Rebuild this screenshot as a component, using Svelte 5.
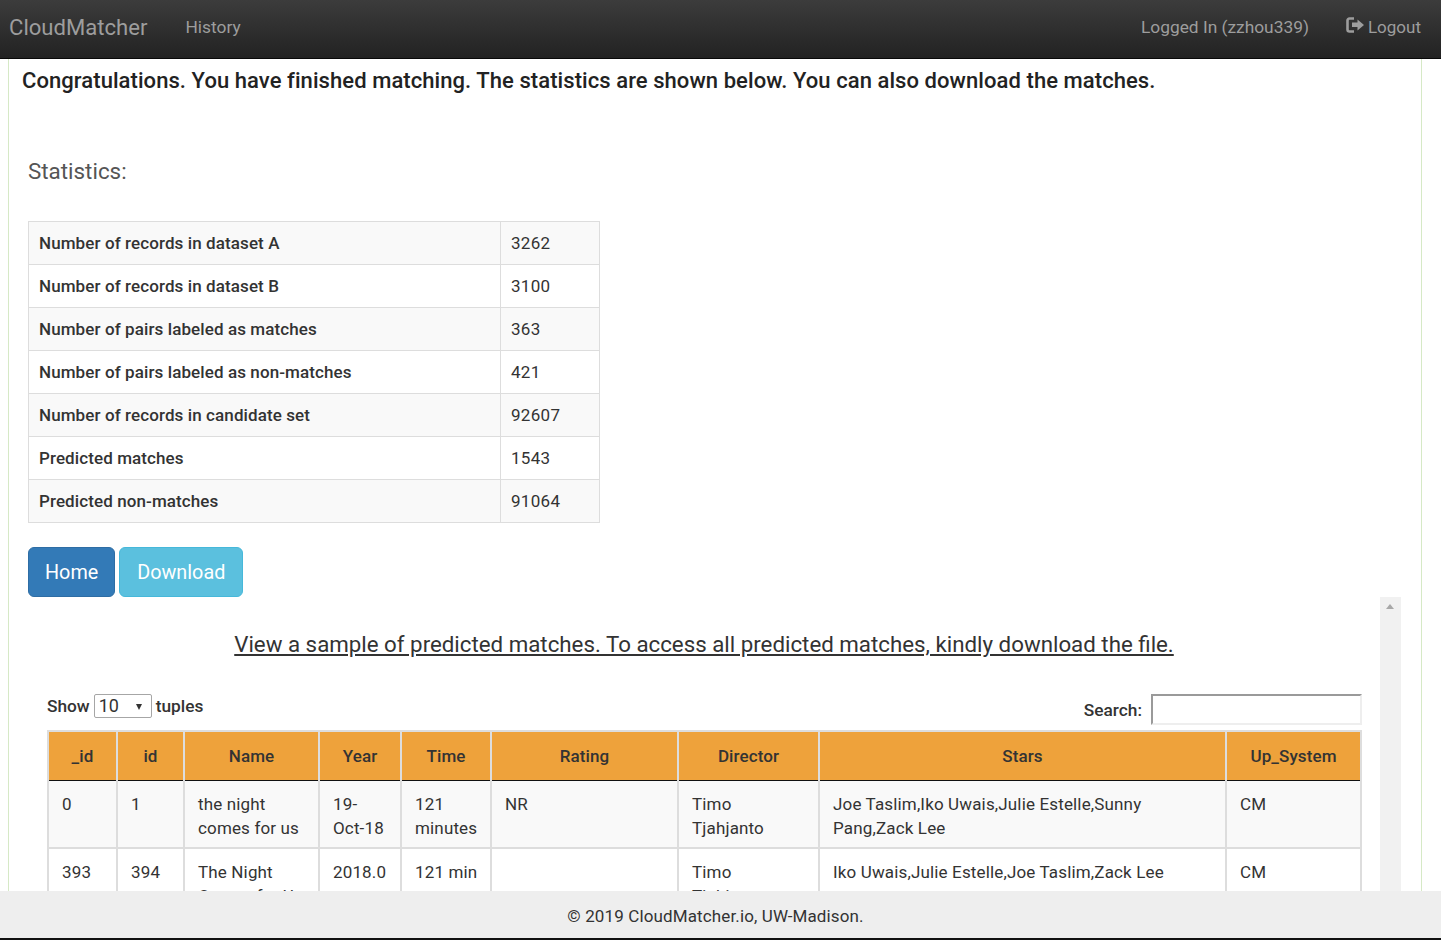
<script>
	const stats = [
		["Number of records in dataset A", "3262"],
		["Number of records in dataset B", "3100"],
		["Number of pairs labeled as matches", "363"],
		["Number of pairs labeled as non-matches", "421"],
		["Number of records in candidate set", "92607"],
		["Predicted matches", "1543"],
		["Predicted non-matches", "91064"]
	];

	const columns = [
		{ name: "_id", width: 69 },
		{ name: "id", width: 67 },
		{ name: "Name", width: 135 },
		{ name: "Year", width: 82 },
		{ name: "Time", width: 90 },
		{ name: "Rating", width: 187 },
		{ name: "Director", width: 141 },
		{ name: "Stars", width: 407 },
		{ name: "Up_System", width: 135 }
	];

	const rows = [
		["0", "1", "the night comes for us", "19-Oct-18", "121 minutes", "NR", "Timo Tjahjanto", "Joe Taslim,Iko Uwais,Julie Estelle,Sunny Pang,Zack Lee", "CM"],
		["393", "394", "The Night Comes for Us", "2018.0", "121 min", "", "Timo Tjahjanto", "Iko Uwais,Julie Estelle,Joe Taslim,Zack Lee", "CM"]
	];
</script>

<div class="page">
	<nav class="navbar">
		<a class="brand" href="#home">CloudMatcher</a>
		<a class="nav-link history" href="#history">History</a>
		<span class="nav-link user">Logged In (zzhou339)</span>
		<a class="nav-link logout" href="#logout">
			<svg width="19" height="16" viewBox="0 0 19 16" aria-hidden="true">
				<path d="M8 1.500H3.500A2 2 0 0 0 1.500 3.500v9a2 2 0 0 0 2 2H8" fill="none" stroke="currentColor" stroke-width="2.600" />
				<path d="M6 5.500h5.500V2.500L18 8l-6.500 5.500v-3.500H6z" fill="currentColor" />
			</svg>
			Logout
		</a>
	</nav>

	<main class="panel">
		<h3 class="congrats">Congratulations. You have finished matching. The statistics are shown below. You can also download the matches.</h3>
		<div class="body">
			<h4 class="stat-title">Statistics:</h4>
			<table class="stats">
				<tbody>
					{#each stats as [label, value]}
						<tr>
							<th>{label}</th>
							<td>{value}</td>
						</tr>
					{/each}
				</tbody>
			</table>
			<div class="actions">
				<button class="btn home">Home</button>
				<button class="btn download">Download</button>
			</div>

			<div class="scroller">
				<div class="sample">
					<h4 class="sample-title">View a sample of predicted matches. To access all predicted matches, kindly download the file.</h4>
					<div class="controls">
						<label class="show">
							Show
							<span class="select">10<i></i></span>
							tuples
						</label>
						<label class="search">
							Search:
							<input type="text" />
						</label>
					</div>
					<table class="tuples">
						<colgroup>
							{#each columns as col}
								<col style="width: {col.width}px" />
							{/each}
						</colgroup>
						<thead>
							<tr>
								{#each columns as col}
									<th>{col.name}</th>
								{/each}
							</tr>
						</thead>
						<tbody>
							{#each rows as row}
								<tr>
									{#each row as cell}
										<td>{cell}</td>
									{/each}
								</tr>
							{/each}
						</tbody>
					</table>
				</div>
				<div class="track"><i></i></div>
			</div>
		</div>
	</main>

	<footer class="footer">© 2019 CloudMatcher.io, UW-Madison.</footer>
</div>

<style>
	:global(body) {
		margin: 0;
		background: #fff;
	}
	.page {
		height: 940px;
		display: flex;
		flex-direction: column;
		overflow: hidden;
		font-family: Roboto, "Liberation Sans", sans-serif;
		color: #333;
	}
	.navbar {
		flex: none;
		box-sizing: border-box;
		height: 59px;
		display: flex;
		align-items: center;
		padding: 0 20px 4px 9px;
		background: linear-gradient(to bottom, #3c3c3c 0%, #222 100%);
		border-bottom: 1px solid #080808;
	}
	.brand {
		font-size: 22.100px;
		color: #9d9d9d;
		text-decoration: none;
	}
	.nav-link {
		font-size: 17.350px;
		color: #9d9d9d;
		text-decoration: none;
	}
	.history {
		margin-left: 38px;
	}
	.user {
		margin-left: auto;
	}
	.logout {
		margin-left: 37px;
		display: flex;
		align-items: center;
		gap: 3px;
		font-size: 17px;
	}
	.logout svg {
		margin-top: -5px;
	}
	.panel {
		flex: 1;
		min-height: 0;
		margin: 0 19px 0 8px;
		border-left: 1px solid #d6e9c6;
		border-right: 1px solid #d6e9c6;
		overflow: hidden;
	}
	.congrats {
		margin: 0;
		padding: 8px 0 0 13px;
		font-size: 22px;
		letter-spacing: 0.07px;
		line-height: 28px;
		font-weight: 500;
		color: #222;
	}
	.body {
		padding: 0 19px;
	}
	.stat-title {
		margin: 62px 0 0;
		font-size: 22.400px;
		line-height: 28px;
		font-weight: 400;
		color: #555;
	}
	.stats {
		margin-top: 36px;
		width: 572px;
		border-collapse: collapse;
		font-size: 17px;
	}
	.stats th,
	.stats td {
		padding: 0 10px;
		border: 1px solid #ddd;
		text-align: left;
		box-sizing: border-box;
		height: 43px;
	}
	.stats th {
		width: 472px;
		font-weight: 500;
		letter-spacing: 0.1px;
		color: #333;
	}
	.stats td {
		font-weight: 400;
		letter-spacing: 0.3px;
	}
	.stats tr:nth-child(odd) {
		background: #f9f9f9;
	}
	.actions {
		margin-top: 24px;
		display: flex;
		gap: 4px;
	}
	.btn {
		height: 50px;
		padding: 0 17px;
		border-radius: 6px;
		border: 1px solid;
		font: 400 19.800px Roboto, sans-serif;
		color: #fff;
	}
	.home {
		padding: 0 16px;
		background: #337ab7;
		border-color: #2e6da4;
	}
	.download {
		background: #5bc0de;
		border-color: #46b8da;
	}
	.scroller {
		display: flex;
	}
	.sample {
		width: 1352px;
		flex: none;
	}
	.sample-title {
		margin: 0;
		padding-top: 32px;
		font-size: 22.300px;
		line-height: 30px;
		font-weight: 400;
		text-align: center;
		text-decoration: underline;
		color: #333;
	}
	.controls {
		margin: 32px 18px 0 19px;
		height: 39px;
		display: flex;
		justify-content: space-between;
		align-items: flex-start;
		font-size: 17.300px;
		font-weight: 500;
	}
	.show {
		display: flex;
		align-items: center;
		gap: 4px;
		height: 24px;
		margin-top: 3px;
	}
	.select {
		width: 58px;
		height: 24px;
		box-sizing: border-box;
		border: 1px solid #a6a6a6;
		border-radius: 2px;
		padding-left: 4px;
		font-size: 18px;
		font-weight: 400;
		line-height: 22px;
		position: relative;
	}
	.select i {
		position: absolute;
		right: 9px;
		top: 9px;
		border: 3.500px solid transparent;
		border-top: 6px solid #333;
		border-bottom: 0;
	}
	.search {
		display: flex;
		align-items: center;
		gap: 9px;
		height: 31px;
		margin-top: 3px;
	}
	.search input {
		width: 211px;
		height: 31px;
		box-sizing: border-box;
		padding: 0;
		border: 2px solid #eee;
		border-top-color: #9a9a9a;
		border-left-color: #9a9a9a;
		background: #fff;
		margin: 0;
	}
	.tuples {
		margin-left: 19px;
		width: 1315px;
		table-layout: fixed;
		border-collapse: collapse;
		font-size: 17px;
	}
	.tuples th,
	.tuples td {
		border: 2px solid #ddd;
		box-sizing: border-box;
	}
	.tuples th {
		height: 49px;
		background: #eea23b;
		border-bottom: 1px solid #111;
		font-weight: 500;
		letter-spacing: 0.1px;
		color: #333;
		text-align: center;
		padding: 0;
	}
	.tuples td {
		padding: 11px 12px 7px 13px;
		line-height: 24px;
		vertical-align: top;
		font-weight: 400;
		letter-spacing: 0.15px;
	}
	.tuples tbody tr:first-child td {
		border-top: 0;
	}
	.tuples tbody tr:nth-child(odd) {
		background: #f9f9f9;
	}
	.track {
		flex: none;
		width: 21px;
		background: #f1f1f1;
		position: relative;
		height: 400px;
	}
	.track i {
		position: absolute;
		left: 6px;
		top: 7px;
		border: 4.500px solid transparent;
		border-bottom: 5px solid #a8a8a8;
		border-top: 0;
	}
	.footer {
		flex: none;
		height: 47px;
		padding-right: 10px;
		line-height: 50px;
		background: #eee;
		border-bottom: 2px solid #111;
		text-align: center;
		font-size: 17px;
		letter-spacing: 0.13px;
	}
</style>
